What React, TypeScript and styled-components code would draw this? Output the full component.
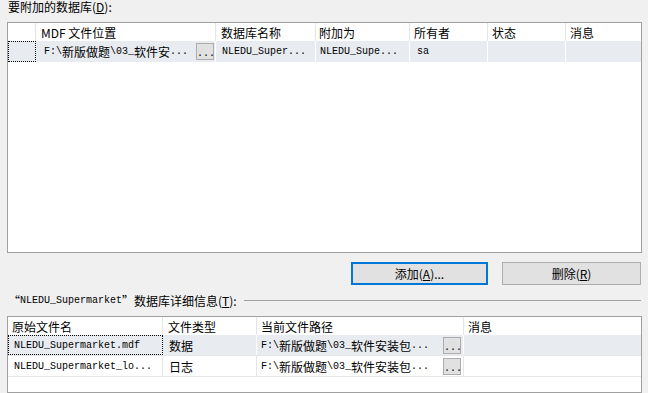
import React from "react";
import styled, { createGlobalStyle, css } from "styled-components";

const Global = createGlobalStyle`
  html, body { margin: 0; padding: 0; background: #f0f0f0; }
  body { font-family: "Noto Sans CJK SC", "Liberation Sans", sans-serif; font-size: 12px; color: #000; }
`;

const Page = styled.div`
  width: 648px;
  height: 393px;
  overflow: hidden;
  box-sizing: border-box;
  padding: 0 6px 0 7px;
  display: flex;
  flex-direction: column;
  background: #f0f0f0;
`;

const SectionLabel = styled.div`
  height: 14px;
  line-height: 14px;
  padding-left: 1px;
  font-size: 12px;
  white-space: nowrap;
  u { text-decoration: underline; }
`;

const GridBox = styled.div<{ $top: number; $height?: number }>`
  margin-top: ${(p) => p.$top}px;
  box-sizing: border-box;
  border: 1px solid #a0a0a0;
  background: #fff;
  ${(p) => (p.$height ? css`height: ${p.$height}px;` : css`flex: 1;`)}
  overflow: hidden;
`;

const Row = styled.div<{ $cols: string; $height: number; $shaded?: boolean; $line?: boolean }>`
  display: grid;
  grid-template-columns: ${(p) => p.$cols};
  height: ${(p) => p.$height}px;
  box-sizing: border-box;
  background: ${(p) => (p.$shaded ? "#e8ecf0" : "#fff")};
  ${(p) => p.$line && css`border-bottom: 1px solid #e6e6e6;`}
`;

const HeadCell = styled.div<{ $pad?: number }>`
  display: flex;
  align-items: center;
  padding-left: ${(p) => p.$pad ?? 5}px;
  border-right: 1px solid #e5e5e5;
  font-size: 12px;
  white-space: nowrap;
  overflow: hidden;
  &:last-child { border-right: none; }
`;

const Cell = styled.div<{ $pad?: number; $focus?: boolean; $sep?: string }>`
  position: relative;
  display: flex;
  align-items: center;
  padding-left: ${(p) => p.$pad ?? 6}px;
  box-sizing: border-box;
  border-right: 1px solid ${(p) => p.$sep ?? "#ffffff"};
  white-space: nowrap;
  overflow: hidden;
  ${(p) =>
    p.$focus &&
    css`
      outline: 1px dotted #000;
      outline-offset: -1px;
    `}
  &:last-child { border-right: none; }
`;

const Mono = styled.span`
  font-family: "Liberation Mono", "DejaVu Sans Mono", monospace;
  font-size: 10px;
  letter-spacing: 0;
`;

const Han = styled.span`
  font-family: "Noto Sans CJK SC", sans-serif;
  font-size: 12px;
`;

const Quote = styled.span<{ $open?: boolean }>`
  display: inline-block;
  width: 12px;
  text-align: ${(p) => (p.$open ? "right" : "left")};
  font-family: "Noto Sans CJK SC", sans-serif;
  font-size: 12px;
`;

const Mixed: React.FC<{ text: string }> = ({ text }) => {
  const parts = text.split(/([\u3000-\u9fff\uff00-\uffef]+)/).filter((s) => s.length > 0);
  return (
    <>
      {parts.map((s, i) =>
        /[\u3000-\u9fff\uff00-\uffef]/.test(s) ? <Han key={i}>{s}</Han> : <Mono key={i}>{s}</Mono>
      )}
    </>
  );
};

const Ellipsis = styled.div<{ $right: number }>`
  position: absolute;
  right: ${(p) => p.$right}px;
  top: 2px;
  width: 18px;
  height: 17px;
  box-sizing: border-box;
  background: #e1e1e1;
  border: 1px solid #adadad;
  font-family: "Liberation Mono", monospace;
  font-size: 10px;
  line-height: 20px;
  text-align: center;
  color: #000;
`;

const ButtonBar = styled.div`
  margin-top: 9px;
  display: flex;
  justify-content: flex-end;
  gap: 14px;
  padding-right: 1px;
`;

const Button = styled.div<{ $w: number; $default?: boolean }>`
  width: ${(p) => p.$w}px;
  height: 23px;
  box-sizing: border-box;
  background: #e1e1e1;
  border: ${(p) => (p.$default ? "2px solid #0078d7" : "1px solid #adadad")};
  display: flex;
  align-items: center;
  justify-content: center;
  font-size: 12px;
  u { text-decoration: underline; }
`;

const DetailHeader = styled.div`
  margin-top: 8px;
  height: 14px;
  display: flex;
  align-items: center;
  padding-left: 1px;
  padding-right: 1px;
  white-space: nowrap;
  u { text-decoration: underline; }
`;

const Rule = styled.div`
  flex: 1;
  height: 1px;
  margin-left: 7px;
  margin-top: 1px;
  background: #a0a0a0;
`;

const TOP_COLS = "28px 180px 100px 94px 78px 78px 1fr";
const BOT_COLS = "155px 94px 207px 1fr";

export default function App() {
  return (
    <Page>
      <Global />
      <SectionLabel>
        要附加的数据库(<u>D</u>):
      </SectionLabel>

      <GridBox $top={8} $height={231}>
        <Row $cols={TOP_COLS} $height={18}>
          <HeadCell />
          <HeadCell>MDF 文件位置</HeadCell>
          <HeadCell>数据库名称</HeadCell>
          <HeadCell $pad={3}>附加为</HeadCell>
          <HeadCell $pad={4}>所有者</HeadCell>
          <HeadCell $pad={4}>状态</HeadCell>
          <HeadCell $pad={4}>消息</HeadCell>
        </Row>
        <Row $cols={TOP_COLS} $height={21} $shaded>
          <Cell $focus />
          <Cell $pad={8}>
            <Mixed text="F:\新版做题\03_软件安..." />
            <Ellipsis $right={1}>...</Ellipsis>
          </Cell>
          <Cell $pad={6}>
            <Mixed text="NLEDU_Super..." />
          </Cell>
          <Cell $pad={4}>
            <Mixed text="NLEDU_Supe..." />
          </Cell>
          <Cell $pad={7}>
            <Mixed text="sa" />
          </Cell>
          <Cell />
          <Cell />
        </Row>
      </GridBox>

      <ButtonBar>
        <Button $w={137} $default>
          添加(<u>A</u>)...
        </Button>
        <Button $w={139}>
          删除(<u>R</u>)
        </Button>
      </ButtonBar>

      <DetailHeader>
        <Quote $open>“</Quote>
        <Mono>NLEDU_Supermarket</Mono>
        <Quote>”</Quote>
        <Mono> </Mono>
        <Han>数据库详细信息(</Han>
        <Han>
          <u>T</u>
        </Han>
        <Han>):</Han>
        <Rule />
      </DetailHeader>

      <GridBox $top={9}>
        <Row $cols={BOT_COLS} $height={18}>
          <HeadCell $pad={4}>原始文件名</HeadCell>
          <HeadCell $pad={5}>文件类型</HeadCell>
          <HeadCell $pad={4}>当前文件路径</HeadCell>
          <HeadCell $pad={4}>消息</HeadCell>
        </Row>
        <Row $cols={BOT_COLS} $height={21} $shaded $line>
          <Cell $focus $pad={6}>
            <Mixed text="NLEDU_Supermarket.mdf" />
          </Cell>
          <Cell $pad={6}>
            <Han>数据</Han>
          </Cell>
          <Cell $pad={4}>
            <Mixed text="F:\新版做题\03_软件安装包..." />
            <Ellipsis $right={2}>...</Ellipsis>
          </Cell>
          <Cell />
        </Row>
        <Row $cols={BOT_COLS} $height={21} $line>
          <Cell $pad={6} $sep="#e6e6e6">
            <Mixed text="NLEDU_Supermarket_lo..." />
          </Cell>
          <Cell $pad={6} $sep="#e6e6e6">
            <Han>日志</Han>
          </Cell>
          <Cell $pad={4} $sep="#e6e6e6">
            <Mixed text="F:\新版做题\03_软件安装包..." />
            <Ellipsis $right={2}>...</Ellipsis>
          </Cell>
          <Cell />
        </Row>
      </GridBox>
    </Page>
  );
}
